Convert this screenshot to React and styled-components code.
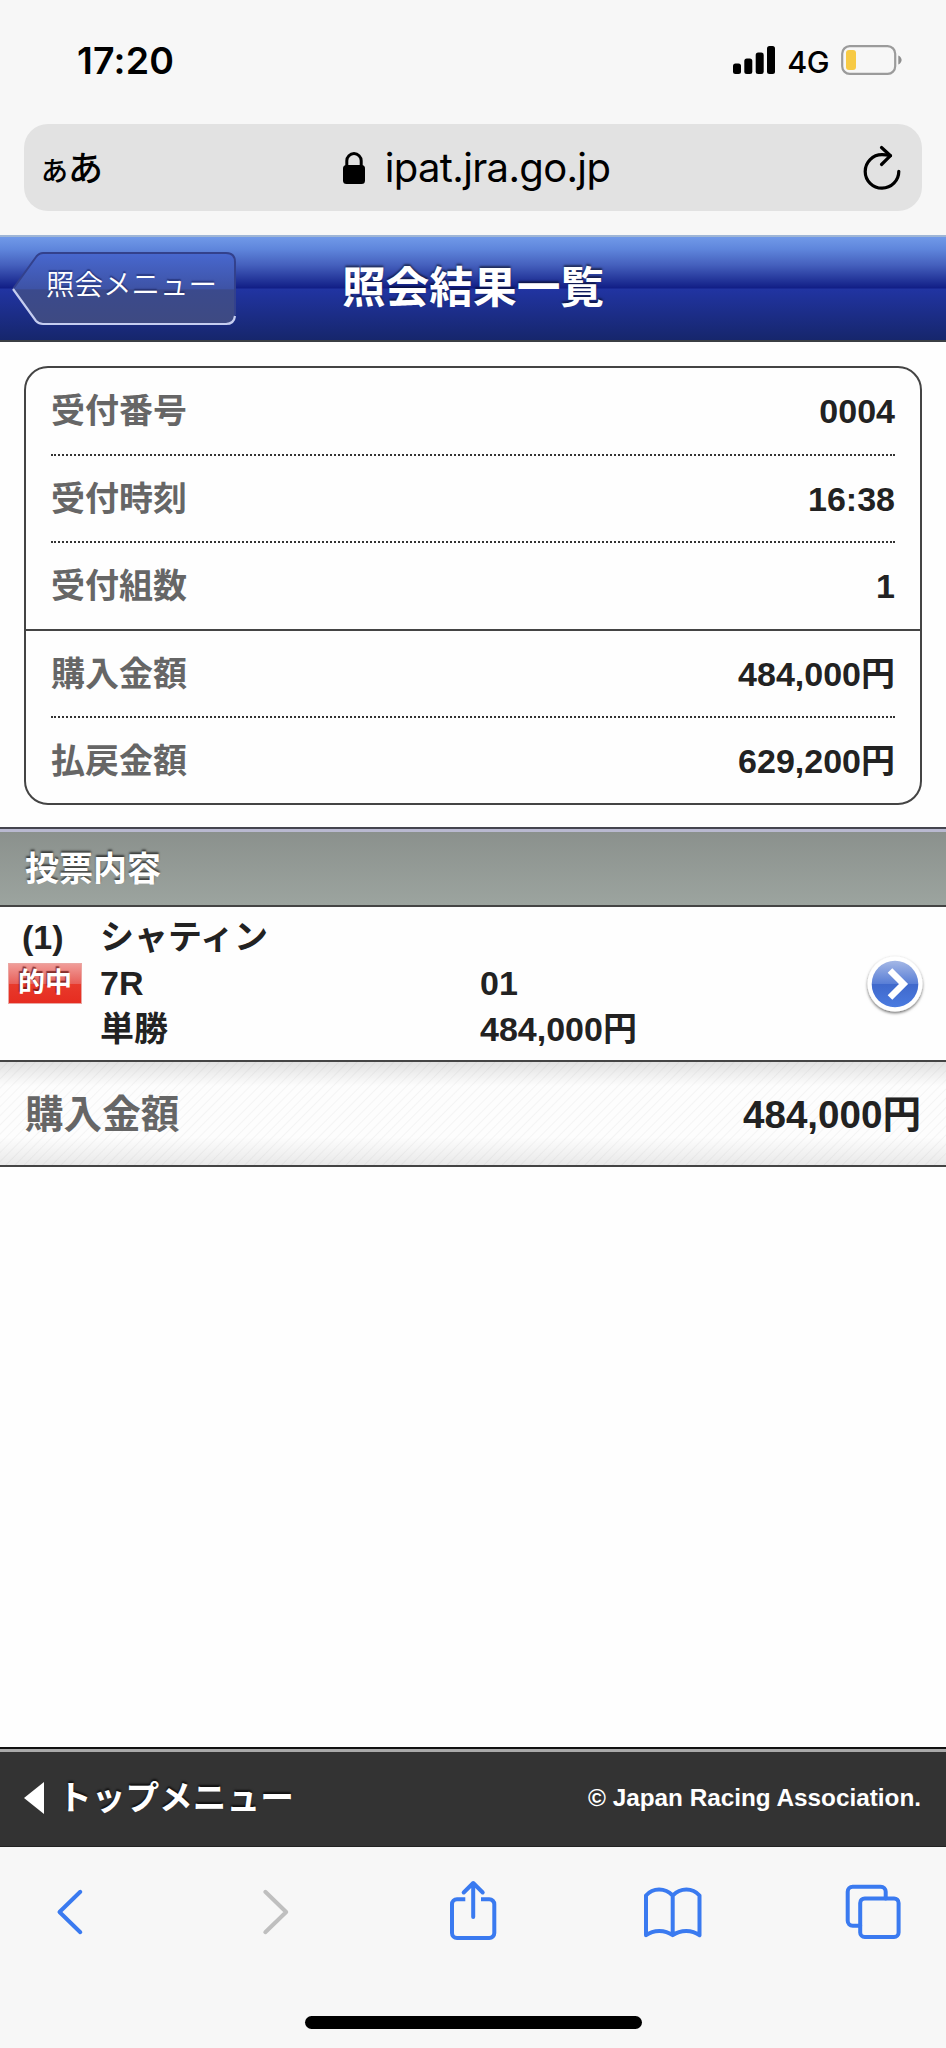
import React from 'react';
import styled, { createGlobalStyle } from 'styled-components';

const GlobalStyle = createGlobalStyle`
  * {
    box-sizing: border-box;
  }

  body {
    margin: 0;
    background: #fefefe;
    font-family: 'Liberation Sans', 'Noto Sans CJK JP', sans-serif;
    color: #222;
  }
`;

const Screen = styled.div`
  width: 946px;
  height: 2048px;
  display: flex;
  flex-direction: column;
  overflow: hidden;
`;

const StatusBar = styled.div`
  height: 124px;
  padding: 0 44px 4px 77px;
  display: flex;
  align-items: center;
  justify-content: space-between;
  background: #f7f7f7;
  color: #000;
  font-family: Inter, sans-serif;
`;

const Clock = styled.span`
  font-size: 37.5px;
  font-weight: 600;
  letter-spacing: 0.2px;
`;

const StatusIcons = styled.div`
  display: flex;
  align-items: center;
`;

const Network = styled.span`
  margin: 2px 12px 0 12px;
  font-size: 30.5px;
  font-weight: 500;
  letter-spacing: -0.5px;
`;

const AddressArea = styled.div`
  height: 111px;
  padding: 0 24px;
  background: #f7f7f7;
`;

const AddressBar = styled.div`
  height: 87px;
  padding: 0 20px 0 17px;
  border-radius: 24px;
  background: #e2e2e2;
  display: grid;
  grid-template-columns: 1fr auto 1fr;
  align-items: center;
  color: #000;
`;

const ReaderButton = styled.div`
  display: flex;
  align-items: baseline;
  font-family: 'Noto Sans CJK JP', sans-serif;
  font-size: 35px;
  font-weight: 500;
  line-height: 50px;
`;

const SmallKana = styled.span`
  font-size: 27px;
`;

const Address = styled.div`
  margin-left: 10px;
  display: flex;
  align-items: center;
  gap: 20px;
  font-family: Inter, sans-serif;
  font-size: 40px;
  letter-spacing: -0.65px;
`;

const Reload = styled.svg`
  justify-self: end;
`;

const Header = styled.header`
  height: 107px;
  border-top: 2px solid #9fb6d6;
  border-bottom: 2px solid #3b3f44;
  background: linear-gradient(
    #7099e8 0,
    #5f86dc 12px,
    #4560bd 28px,
    #111e86 51px,
    #2134a2 52px,
    #16266c 100%
  );
  display: grid;
  grid-template-columns: 1fr auto 1fr;
  align-items: center;
`;

const BackButton = styled.div`
  position: relative;
  width: 226px;
  height: 76px;
  margin-left: 11px;
  padding-left: 35px;
  font-size: 28.5px;
  font-weight: 350;
  line-height: 69px;
  color: #fff;
  text-shadow: 0 -2px 1px rgba(20, 30, 90, 0.5);
`;

const BackShape = styled.svg`
  position: absolute;
  top: 0;
  left: 0;
`;

const BackLabel = styled.span`
  position: relative;
`;

const Title = styled.h1`
  margin: 0 0 2px;
  font-size: 43.7px;
  font-weight: bold;
  line-height: 60px;
  color: #fff;
  text-shadow: 0 -2px 2px rgba(0, 0, 0, 0.5);
`;

const Summary = styled.dl`
  margin: 24px 24px 22px;
  border: 2px solid #444;
  border-radius: 24px;
`;

const SummaryGroup = styled.div`
  padding: 0 25px;

  & + & {
    border-top: 2px solid #444;
  }
`;

const SummaryRow = styled.div`
  height: ${props => props.$height}px;
  display: flex;
  align-items: center;
  justify-content: space-between;
  font-size: 34px;
  font-weight: bold;
  line-height: 48px;

  & + & {
    border-top: 2px dotted #333;
  }
`;

const Label = styled.dt`
  color: #666;
`;

const Value = styled.dd`
  margin: 0;
`;

const SectionTitle = styled.h2`
  height: 80px;
  margin: 0;
  padding: 0 25px;
  border-top: 2px solid #45454f;
  border-bottom: 2px solid #444;
  box-shadow: inset 0 3px #b9b9d0;
  background: linear-gradient(#8a908c, #9ca49f);
  color: #fff;
  font-size: 34px;
  font-weight: bold;
  line-height: 81px;
  text-shadow: 0 -2px 2px rgba(0, 0, 0, 0.6);
`;

const Bet = styled.div`
  height: 153px;
  padding: 6px 24px 0 8px;
  display: grid;
  grid-template-columns: 92px 380px 1fr 58px;
  grid-template-rows: 47px 46px 46px;
  align-items: center;
  font-size: 34px;
  font-weight: bold;
  line-height: 46px;
`;

const BetNumber = styled.span`
  padding-left: 14px;
`;

const Venue = styled.span`
  grid-column: 2 / 4;
`;

const HitBadge = styled.span`
  width: 74px;
  height: 41px;
  border: 1px solid #eba6a2;
  background: linear-gradient(#f09c98 0, #e8605a 50%, #e83a2c 51%, #e62c20 100%);
  color: #fff;
  font-size: 27px;
  line-height: 38px;
  text-align: center;
  text-shadow: -1px -2px 1px rgba(90, 10, 10, 0.7);
`;

const DetailIcon = styled.svg`
  grid-area: 1 / 4 / 4 / 5;
  margin-top: 5px;
`;

const BetType = styled.span`
  grid-column: 2;
`;

const Total = styled.div`
  height: 107px;
  padding: 0 25px 5px;
  border-top: 2px solid #444;
  border-bottom: 2px solid #444;
  background:
    linear-gradient(rgba(0, 0, 0, 0.11) 0, rgba(0, 0, 0, 0) 24px, rgba(0, 0, 0, 0) 75px, rgba(0, 0, 0, 0.08) 100%),
    repeating-linear-gradient(135deg, #fdfdfd 0, #fdfdfd 4.5px, #f4f4f4 5.5px, #fdfdfd 6.5px);
  display: flex;
  align-items: center;
  justify-content: space-between;
  font-size: 38.6px;
  font-weight: bold;
`;

const TotalLabel = styled.span`
  color: #666;
`;

const Filler = styled.div`
  flex: 1;
`;

const Footer = styled.footer`
  height: 100px;
  padding: 0 25px 0 24px;
  border-top: 2px solid #111;
  border-bottom: 1px solid #222;
  box-shadow: inset 0 3px #aaa;
  background: #333;
  color: #fff;
  font-weight: bold;
  display: flex;
  align-items: center;
  justify-content: space-between;
`;

const TopMenu = styled.span`
  display: flex;
  align-items: center;
  gap: 14px;
  font-size: 33.7px;
  line-height: 48px;
  text-shadow: 0 -2px 2px rgba(0, 0, 0, 0.7);
`;

const Copyright = styled.small`
  font-size: 24.3px;
`;

const Toolbar = styled.nav`
  height: 201px;
  background: #f7f7f7;
  display: flex;
  flex-direction: column;
  align-items: center;
  justify-content: space-between;
  padding: 33px 0 19px;
`;

const ToolbarIcons = styled.div`
  width: 100%;
  padding: 0 43px;
  display: flex;
  justify-content: space-between;
`;

const ToolbarIcon = styled.svg.attrs({ width: 60, height: 64, viewBox: '0 0 60 64' })`
  fill: none;
  stroke: ${props => (props.$disabled ? '#bfbfbf' : '#3a7af0')};
  stroke-width: 4;
  stroke-linecap: round;
  stroke-linejoin: round;
`;

const HomeIndicator = styled.div`
  width: 337px;
  height: 13px;
  border-radius: 7px;
  background: #000;
`;

const receipt = [
  { label: '受付番号', value: '0004', height: 86 },
  { label: '受付時刻', value: '16:38', height: 87 },
  { label: '受付組数', value: '1', height: 88 },
];

const amounts = [
  { label: '購入金額', value: '484,000円', height: 85 },
  { label: '払戻金額', value: '629,200円', height: 87 },
];

const SummaryRows = ({ rows }) => (
  <SummaryGroup>
    {rows.map(({ label, value, height }) => (
      <SummaryRow key={label} $height={height}>
        <Label>{label}</Label>
        <Value>{value}</Value>
      </SummaryRow>
    ))}
  </SummaryGroup>
);

const App = () => {
  return (
    <Screen>
      <GlobalStyle />

      <StatusBar>
        <Clock>17:20</Clock>
        <StatusIcons>
          <svg width="42" height="28" viewBox="0 0 42 28">
            <rect x="0" y="17.5" width="8" height="10.5" rx="2.5" />
            <rect x="11.3" y="12.5" width="8" height="15.5" rx="2.5" />
            <rect x="22.7" y="6.5" width="8" height="21.5" rx="2.5" />
            <rect x="34" y="0" width="8" height="28" rx="2.5" />
          </svg>
          <Network>4G</Network>
          <svg width="61" height="30" viewBox="0 0 61 30">
            <rect x="1.2" y="1.2" width="53" height="27.6" rx="7.5" fill="none" stroke="#9b9b9b" strokeWidth="2.2" />
            <rect x="5" y="5" width="10" height="20" rx="3" fill="#f7ca45" />
            <path d="M57.3 10.5c4.4 1.8 4.4 7.2 0 9z" fill="#8f8f8f" />
          </svg>
        </StatusIcons>
      </StatusBar>

      <AddressArea>
        <AddressBar>
          <ReaderButton>
            <SmallKana>あ</SmallKana>あ
          </ReaderButton>
          <Address>
            <svg width="22" height="32" viewBox="0 0 22 32">
              <rect x="0" y="13" width="22" height="19" rx="3.5" />
              <path d="M3.8 14V8.8a7.2 7.2 0 0 1 14.4 0V14" fill="none" stroke="#000" strokeWidth="3" />
            </svg>
            ipat.jra.go.jp
          </Address>
          <Reload width="40" height="46" viewBox="0 0 40 46" fill="none" stroke="#000" strokeWidth="3.2" strokeLinecap="round" strokeLinejoin="round">
            <path d="M36.8 26.3A16.8 16.8 0 1 1 20 9.6q4 0 8.5 1.1" />
            <path d="M19.5 2.5l9 8.2-9 8.8" />
          </Reload>
        </AddressBar>
      </AddressArea>

      <Header>
        <BackButton>
          <BackShape width="226" height="76" viewBox="0 0 226 76">
            <defs>
              <linearGradient id="backFill" x1="0" y1="0" x2="0" y2="1">
                <stop offset="0" stopColor="#4868cf" />
                <stop offset="0.5" stopColor="#3e53a6" />
                <stop offset="0.52" stopColor="#3b4a8c" />
                <stop offset="1" stopColor="#3e4a82" />
              </linearGradient>
            </defs>
            <path d="M2 38 25 6Q28 2 32 2H215Q224 2 224 11V64Q224 73 215 73H32Q28 73 25 70Z" fill="url(#backFill)" />
            <path d="M2 38 25 6Q28 2 32 2H215Q224 2 224 11V64" fill="none" stroke="#33418c" strokeWidth="2" />
            <path d="M2 38 25 70Q28 73 32 73H215Q223 73 224 65" fill="none" stroke="#c5cdf0" strokeWidth="2.2" />
          </BackShape>
          <BackLabel>照会メニュー</BackLabel>
        </BackButton>
        <Title>照会結果一覧</Title>
      </Header>

      <Summary>
        <SummaryRows rows={receipt} />
        <SummaryRows rows={amounts} />
      </Summary>

      <SectionTitle>投票内容</SectionTitle>

      <Bet>
        <BetNumber>(1)</BetNumber>
        <Venue>シャティン</Venue>
        <HitBadge>的中</HitBadge>
        <span>7R</span>
        <span>01</span>
        <BetType>単勝</BetType>
        <span>484,000円</span>
        <DetailIcon width="64" height="68" viewBox="0 0 64 68">
          <defs>
            <linearGradient id="detailFill" x1="0" y1="0" x2="0" y2="1">
              <stop offset="0" stopColor="#a5b8e6" />
              <stop offset="0.49" stopColor="#5a7fd6" />
              <stop offset="0.51" stopColor="#4069cc" />
              <stop offset="1" stopColor="#4a7be0" />
            </linearGradient>
            <filter id="detailShadow" x="-20%" y="-20%" width="140%" height="140%">
              <feDropShadow dx="0" dy="1.5" stdDeviation="1.8" floodOpacity="0.6" />
            </filter>
          </defs>
          <circle cx="31" cy="33" r="27.5" fill="#fff" filter="url(#detailShadow)" />
          <circle cx="31" cy="33" r="23.3" fill="url(#detailFill)" />
          <path d="M26 19.5 39.5 33 26 46.5" fill="none" stroke="#fff" strokeWidth="6.5" />
        </DetailIcon>
      </Bet>

      <Total>
        <TotalLabel>購入金額</TotalLabel>
        <span>484,000円</span>
      </Total>

      <Filler />

      <Footer>
        <TopMenu>
          <svg width="20" height="32" viewBox="0 0 20 32">
            <path d="M0 16 20 0V32Z" fill="#fff" />
          </svg>
          トップメニュー
        </TopMenu>
        <Copyright>© Japan Racing Association.</Copyright>
      </Footer>

      <Toolbar>
        <ToolbarIcons>
          <ToolbarIcon>
            <path d="M37.3 11.8 16.5 32l20.8 20.2" />
          </ToolbarIcon>
          <ToolbarIcon $disabled>
            <path d="M22.3 11.8 43.2 32 22.3 52.2" />
          </ToolbarIcon>
          <ToolbarIcon>
            <path d="M22.3 19.3H14a5 5 0 0 0-5 5V53a5 5 0 0 0 5 5H46.3a5 5 0 0 0 5-5V24.3a5 5 0 0 0-5-5H38" strokeLinecap="butt" />
            <path d="M30.2 37V3M20.7 12.5 30.2 3l9.5 9.5" />
          </ToolbarIcon>
          <ToolbarIcon>
            <path d="M29.7 15.5C22 7.5 10 7.5 3 15.5V55.2C10.5 49.5 22 49.5 29.7 55.2 37.5 49.5 49 49.5 56.5 55.2V15.5C49.5 7.5 37.5 7.5 29.7 15.5V55" />
          </ToolbarIcon>
          <ToolbarIcon>
            <rect x="17.2" y="18.4" width="38.4" height="38.6" rx="4.5" />
            <path d="M17.2 45.7H9.7a5 5 0 0 1-5-5V11.7a5 5 0 0 1 5-5H37.7a5 5 0 0 1 5 5V18.4" />
          </ToolbarIcon>
        </ToolbarIcons>
        <HomeIndicator />
      </Toolbar>
    </Screen>
  );
};

export default App;
